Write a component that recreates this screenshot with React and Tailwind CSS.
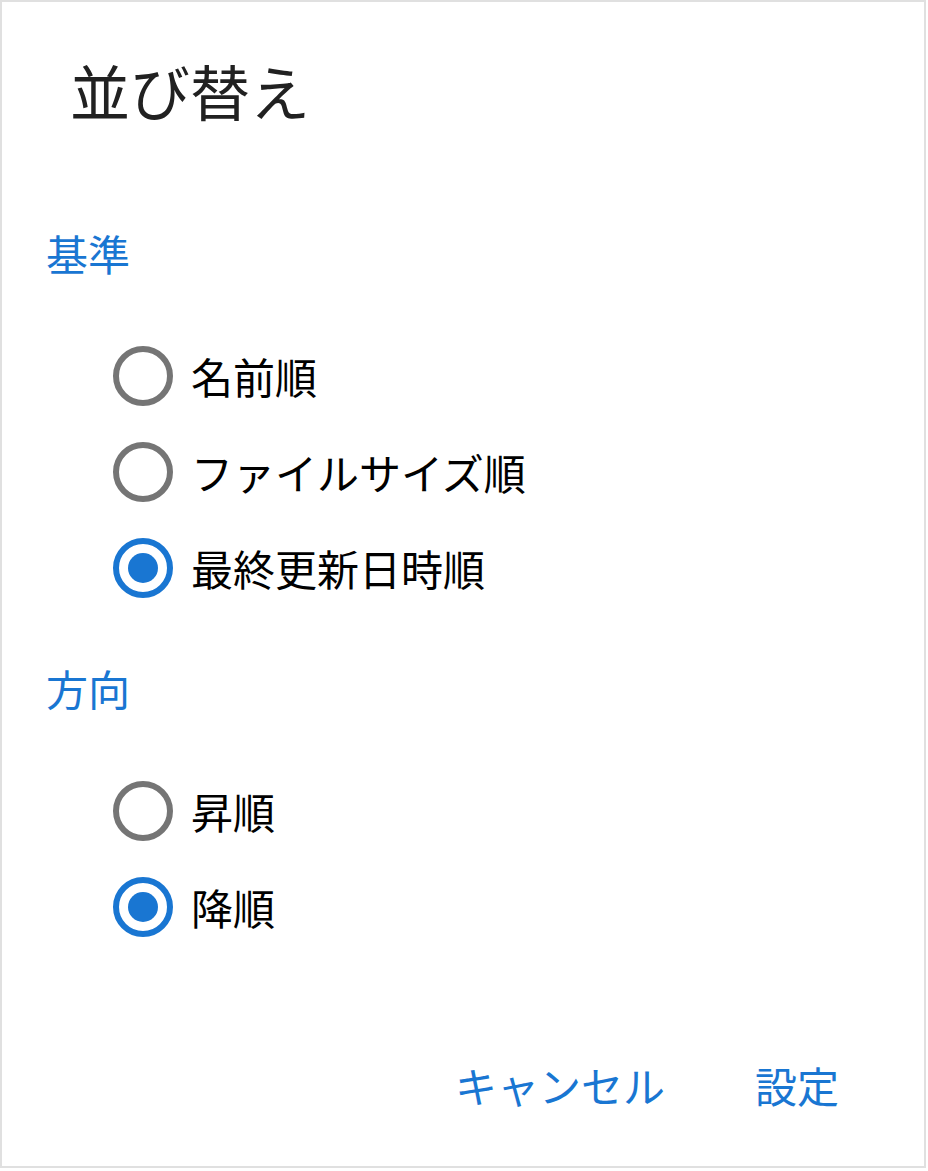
import React, { useState } from "react";

function Radio({ checked }) {
  return (
    <span
      className={
        "flex h-[60px] w-[60px] shrink-0 items-center justify-center rounded-full border-[6px] " +
        (checked ? "border-[#1976d2]" : "border-[#757575]")
      }
    >
      {checked ? <span className="h-[30px] w-[30px] rounded-full bg-[#1976d2]" /> : null}
    </span>
  );
}

function Option({ label, checked, onClick }) {
  return (
    <div className="flex h-[96px] cursor-pointer items-center gap-[18px]" onClick={onClick}>
      <Radio checked={checked} />
      <span className="text-[42px] leading-[42px] text-black">{label}</span>
    </div>
  );
}

export default function App() {
  const [sortBy, setSortBy] = useState(2);
  const [dir, setDir] = useState(1);
  const sortOptions = ["名前順", "ファイルサイズ順", "最終更新日時順"];
  const dirOptions = ["昇順", "降順"];
  return (
    <div
      className="h-[1168px] w-[926px] border-2 border-[#e0e0e0] bg-white"
      style={{ fontFamily: '"Noto Sans CJK JP", "Noto Sans", sans-serif' }}
    >
      <div className="mt-[58px] h-[60px] pl-[68px] text-[60px] leading-[60px] text-[#212121]">
        並び替え
      </div>
      <div className="mt-[112px] h-[42px] pl-[44px] text-[42px] leading-[42px] text-[#1976d2]">
        基準
      </div>
      <div className="mt-[54px] flex flex-col pl-[111px]">
        {sortOptions.map((o, i) => (
          <Option key={o} label={o} checked={sortBy === i} onClick={() => setSortBy(i)} />
        ))}
      </div>
      <div className="mt-[51px] h-[42px] pl-[44px] text-[42px] leading-[42px] text-[#1976d2]">
        方向
      </div>
      <div className="mt-[54px] flex flex-col pl-[111px]">
        {dirOptions.map((o, i) => (
          <Option key={o} label={o} checked={dir === i} onClick={() => setDir(i)} />
        ))}
      </div>
      <div className="mt-[109px] flex h-[42px] justify-end gap-[90px] pr-[85px] text-[42px] leading-[42px] text-[#1976d2]">
        <span>キャンセル</span>
        <span>設定</span>
      </div>
    </div>
  );
}
